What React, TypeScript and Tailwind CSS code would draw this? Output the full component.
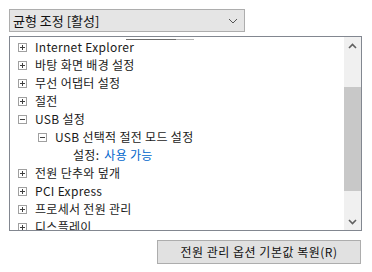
import React from "react";

const font = { fontFamily: '"Noto Sans CJK KR", "Noto Sans", sans-serif' };

function Box({ open }: { open?: boolean }) {
  return (
    <div className="relative w-[9px] h-[9px] border border-[#a0a0a0] bg-white shrink-0">
      <div className="absolute left-[1px] top-[3px] w-[5px] h-[1px] bg-[#404040]" />
      {!open && <div className="absolute left-[3px] top-[1px] w-[1px] h-[5px] bg-[#404040]" />}
    </div>
  );
}

function Row({ level, open, children }: { level: number; open?: boolean; children: React.ReactNode }) {
  const pl = level === 0 ? "pl-[8px]" : "pl-[28px]";
  return (
    <div className={`h-[18px] flex items-center ${pl}`}>
      <Box open={open} />
      <span className="ml-[8px] text-[12px] leading-[18px] tracking-[0.3px] text-[#1a1a1a] whitespace-nowrap">{children}</span>
    </div>
  );
}

export default function App() {
  return (
    <div className="w-[372px] h-[272px] bg-white relative overflow-hidden" style={font}>
      <div className="absolute left-[9px] top-[9px] w-[236px] h-[23px] bg-[#e5e5e5] border border-[#adadad] flex items-center justify-between pl-[3px] pr-[6px]">
        <span className="text-[13px] text-[#111] leading-none">균형 조정 [활성]</span>
        <svg width="10" height="6" viewBox="0 0 10 6">
          <path d="M1 1 L5 5 L9 1" stroke="#555" strokeWidth="1" fill="none" />
        </svg>
      </div>

      <div className="absolute left-[9px] top-[36px] w-[353px] h-[195px] border border-[#828790] bg-white flex overflow-hidden">
        <div className="flex-1 pt-[1px] overflow-hidden relative">
          <div className="absolute left-[116px] top-[2px] w-[50px] h-[1px] bg-[#6d6d6d]" />
          <div className="absolute left-[166px] top-[2px] w-[18px] h-[1px] bg-[#b4b4b4]" />
          <Row level={0}>Internet Explorer</Row>
          <Row level={0}>바탕 화면 배경 설정</Row>
          <Row level={0}>무선 어댑터 설정</Row>
          <Row level={0}>절전</Row>
          <Row level={0} open>USB 설정</Row>
          <Row level={1} open>USB 선택적 절전 모드 설정</Row>
          <div className="h-[18px] flex items-center pl-[63px] text-[12px] tracking-[0.3px] whitespace-nowrap">
            <span className="text-[#1a1a1a]">설정:</span>
            <span className="ml-[5px] text-[#0066cc]">사용 가능</span>
          </div>
          <Row level={0}>전원 단추와 덮개</Row>
          <Row level={0}>PCI Express</Row>
          <Row level={0}>프로세서 전원 관리</Row>
          <Row level={0}>디스플레이</Row>
        </div>
        <div className="w-[17px] bg-[#f0f0f0] flex flex-col shrink-0">
          <div className="h-[17px] flex items-center justify-center">
            <svg width="9" height="6" viewBox="0 0 9 6">
              <path d="M1 5 L4.5 1.5 L8 5" stroke="#606060" strokeWidth="1.6" fill="none" />
            </svg>
          </div>
          <div className="h-[33px]" />
          <div className="h-[104px] bg-[#c8c8c8]" />
          <div className="flex-1" />
          <div className="h-[17px] flex items-center justify-center">
            <svg width="9" height="6" viewBox="0 0 9 6">
              <path d="M1 1 L4.5 4.5 L8 1" stroke="#606060" strokeWidth="1.6" fill="none" />
            </svg>
          </div>
        </div>
      </div>

      <div className="absolute left-[157px] top-[240px] w-[204px] h-[24px] bg-[#e1e1e1] border border-[#adadad] flex items-center justify-center">
        <span className="text-[12px] tracking-[0.5px] text-[#111] whitespace-nowrap">전원 관리 옵션 기본값 복원(R)</span>
      </div>
    </div>
  );
}
